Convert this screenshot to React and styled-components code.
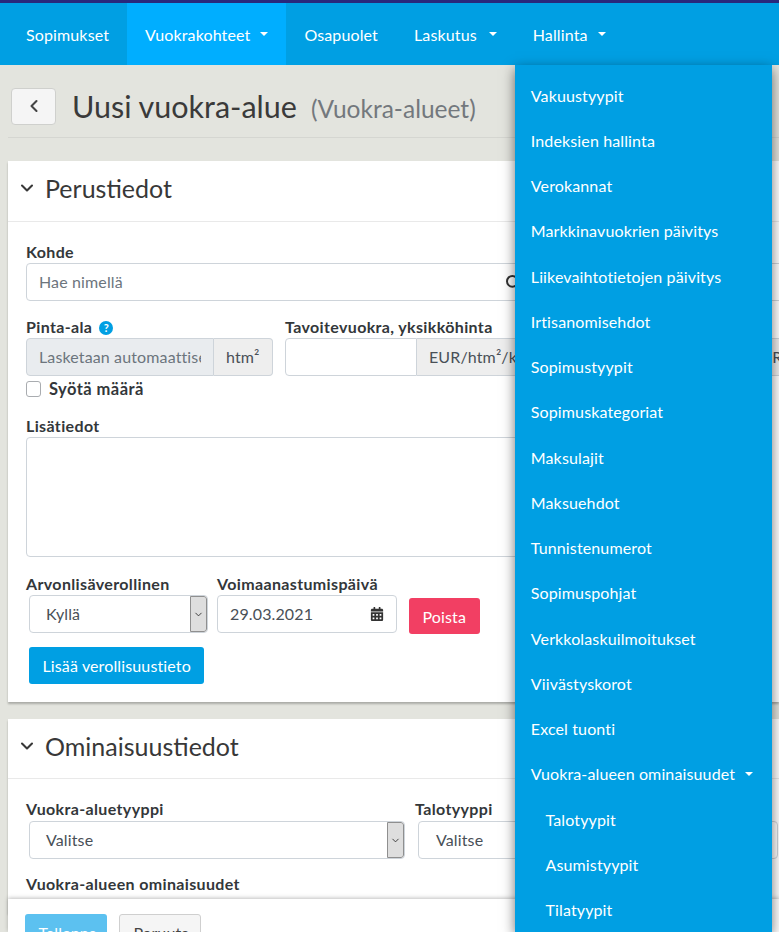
import React from "react";
import styled, { createGlobalStyle } from "styled-components";
import { ChevronDown, ChevronLeft, Search } from "lucide-react";
import { FaCalendarAlt } from "react-icons/fa";

const Global = createGlobalStyle`
  html, body { margin: 0; padding: 0; height: 932px; overflow: hidden; background: #e3e4de; }
  body { font-family: "Lato", "Noto Sans", sans-serif; color: #333; font-size: 16px; letter-spacing: .13px; }
  * { box-sizing: border-box; }
`;
const Page = styled.div`position: relative; width: 779px; height: 932px; overflow: hidden;`;
const Nav = styled.nav`display: flex; height: 65px; background: #009fe3; border-top: 3px solid #29287c;`;
const NavItem = styled.div`
  display: flex; align-items: center; gap: ${p => p.$gap || 10}px; height: 62px; padding: 0 17.5px 0 18.5px; color: #fff; font-size: 16px;
  background: ${p => p.$active ? "#00aeff" : "transparent"};
  &:first-child { padding-left: 26px; }
`;
const Caret = styled.i`display: inline-block; flex: none; width: 0; height: 0; border: 4.5px solid transparent; border-top-color: #fff; border-bottom: 0;`;
const Content = styled.main`padding: 0 0 0 8px;`;
const TitleRow = styled.header`display: flex; align-items: center; height: 73px; border-bottom: 1px solid #d5d6d1; padding-left: 3px; padding-top: 10px; margin-bottom: 23px;`;
const BackBtn = styled.button`display: flex; align-items: center; justify-content: center; width: 45px; height: 37px; padding: 0; border: 1px solid #cfd0cd; border-radius: 4px; background: #f5f5f5; color: #444;`;
const Title = styled.h1`margin: 0 0 0 16px; font-weight: 400; font-size: 30.5px; letter-spacing: 0; color: #3a3a3a;`;
const Sub = styled.small`margin-left: 14px; font-size: 24.5px; color: #73787d;`;
const Card = styled.section`background: #fff; box-shadow: 0 2px 2px rgba(0,0,0,.25); margin-bottom: 17px;`;
const CardHead = styled.div`display: flex; align-items: center; gap: 8px; height: ${p => p.$h || 61}px; padding: 0 0 6px 9px; border-bottom: 1px solid #e9e9e9; font-size: 25px; letter-spacing: 0; color: #383838;`;
const CardBody = styled.div`padding: 21px 18px 18px;`;
const Label = styled.label`display: block; margin-top: ${p => p.$top || 0}px; height: ${p => p.$h || 20}px; padding-bottom: 2px; font-weight: 700; font-size: 16px; letter-spacing: .36px; color: #33373a; line-height: 18px; white-space: nowrap;`;
const Row = styled.div`display: flex; gap: ${p => p.$gap || 12}px; margin-top: ${p => p.$top || 0}px;`;
const Input = styled.div`
  display: flex; flex: none; align-items: center; justify-content: space-between; height: 38px; padding: 0 12px 1px; width: ${p => p.$w}px;
  border: 1px solid #ced4da; border-radius: ${p => p.$radius || "4px"}; color: ${p => p.$dim ? "#6c757d" : "#495057"};
  background: ${p => p.$dim ? "#e9ecef" : "#fff"}; white-space: nowrap; overflow: hidden;
`;
const Clip = styled.span`display: block; overflow: hidden;`;
const Placeholder = styled.span`color: #6c757d;`;
const SearchWrap = styled(Input)`justify-content: flex-start; gap: 382px;`;
const Addon = styled(Input)`background: #eeeeee; color: #495057; border-left: 0; border-radius: 0 4px 4px 0;`;
const Group = styled.div`display: flex;`;
const Check = styled.div`display: flex; align-items: center; gap: 8px; margin-top: 3px; height: 20px; font-weight: 700; font-size: 16.5px; letter-spacing: .45px; color: #33373a;`;
const Box = styled.span`width: 15px; height: 16px; border: 1px solid #a9acb0; border-radius: 3px;`;
const Help = styled.span`
  display: inline-flex; align-items: center; justify-content: center; vertical-align: 1px; width: 14px; height: 14px; margin-left: 7px; border-radius: 50%;
  background: #009fe3; color: #fff; font-size: 11px; letter-spacing: 0; line-height: 14px;
`;
const TextArea = styled.div`height: 120px; width: 100%; border: 1px solid #ced4da; border-radius: 4px;`;
const SelectBox = styled.div`
  display: flex; flex: none; align-items: center; justify-content: space-between; height: 38px; width: ${p => p.$w}px; margin-left: 3px;
  padding: 0 0 1px ${p => p.$pl || 16}px; border: 1px solid #ced4da; border-radius: 4px; color: #495057; overflow: hidden;
`;
const SelectArrow = styled.span`display: flex; align-items: center; justify-content: center; align-self: stretch; width: 17px; margin-bottom: -1px; background: #dedede; border: 1px solid #8f8f8f; border-radius: 0 3px 3px 0; color: #333;`;
const Btn = styled.button`
  flex: none; height: ${p => p.$h || 37}px; width: ${p => p.$w ? `${p.$w}px` : "auto"}; padding: 0 13.5px; border: 0; border-radius: 3px; background: ${p => p.$bg}; color: #fff; font: inherit; letter-spacing: inherit; margin: ${p => p.$m || 0};
`;
const Footer = styled.footer`
  position: absolute; left: 8px; right: 0; top: 899px; height: 33px; display: flex; gap: 12px; padding: 15px 0 0 17px; background: #fff; box-shadow: 0 -1px 4px rgba(0,0,0,.25);
`;
const Cancel = styled(Btn)`background: #f5f5f5; color: #444; border: 1px solid #cfcfcf;`;
const Menu = styled.ul`
  position: absolute; left: 515px; top: 65px; width: 257px; height: 867px; margin: 0; padding: 7.4px 0 0; list-style: none; background: #009fe3; box-shadow: 0 4px 12px rgba(0,0,0,.55);
`;
const MenuItem = styled.li`display: flex; align-items: center; gap: 10px; height: 45.25px; padding-left: ${p => p.$sub ? 30.5 : 15.8}px; color: #fff;`;
const items = ["Vakuustyypit","Indeksien hallinta","Verokannat","Markkinavuokrien päivitys","Liikevaihtotietojen päivitys","Irtisanomisehdot","Sopimustyypit","Sopimuskategoriat","Maksulajit","Maksuehdot","Tunnistenumerot","Sopimuspohjat","Verkkolaskuilmoitukset","Viivästyskorot","Excel tuonti"];

export default function App() {
  return (
    <Page>
      <Global />
      <Nav>
        <NavItem>Sopimukset</NavItem>
        <NavItem $active>Vuokrakohteet <Caret /></NavItem>
        <NavItem>Osapuolet</NavItem>
        <NavItem $gap={12}>Laskutus <Caret /></NavItem>
        <NavItem>Hallinta <Caret /></NavItem>
      </Nav>
      <Content>
        <TitleRow>
          <BackBtn><ChevronLeft size={20} strokeWidth={2.5} /></BackBtn>
          <Title>Uusi vuokra-alue<Sub>(Vuokra-alueet)</Sub></Title>
        </TitleRow>
        <Card>
          <CardHead><ChevronDown size={20} strokeWidth={2.5} />Perustiedot</CardHead>
          <CardBody>
            <Label>Kohde</Label>
            <SearchWrap $w={760}><Placeholder>Hae nimellä</Placeholder><Search size={16} strokeWidth={3} color="#333" /></SearchWrap>
            <Row $top={17}>
              <div>
                <Label>Pinta-ala<Help>?</Help></Label>
                <Group><Input $w={188} $dim $radius="4px 0 0 4px"><Clip>Lasketaan automaattisesti</Clip></Input><Addon $w={59}>htm²</Addon></Group>
                <Check><Box />Syötä määrä</Check>
              </div>
              <div>
                <Label>Tavoitevuokra, yksikköhinta</Label>
                <Group><Input $w={132} $radius="4px 0 0 4px" /><Addon $w={200}>EUR/htm²/kk</Addon></Group>
              </div>
              <div>
                <Label>&nbsp;</Label>
                <Group><Input $w={110} $radius="4px 0 0 4px" /><Addon $w={200}>EUR/htm²/kk</Addon></Group>
              </div>
            </Row>
            <Label $top={18}>Lisätiedot</Label>
            <TextArea />
            <Row $top={18} $gap={9}>
              <div>
                <Label>Arvonlisäverollinen</Label>
                <SelectBox $w={179}>Kyllä<SelectArrow><ChevronDown size={11} /></SelectArrow></SelectBox>
              </div>
              <div>
                <Label>Voimaanastumispäivä</Label>
                <Input $w={180}>29.03.2021<FaCalendarAlt size={14} color="#333" /></Input>
              </div>
              <Btn $bg="#f23f63" $h={36} $m="23px 0 0 3px">Poista</Btn>
            </Row>
            <Btn $bg="#009fe3" $m="13px 0 0 3px">Lisää verollisuustieto</Btn>
          </CardBody>
        </Card>
        <Card>
          <CardHead $h={60}><ChevronDown size={20} strokeWidth={2.5} />Ominaisuustiedot</CardHead>
          <CardBody>
            <Row $gap={10}>
              <div>
                <Label $h={21}>Vuokra-aluetyyppi</Label>
                <SelectBox $w={376}>Valitse<SelectArrow><ChevronDown size={11} /></SelectArrow></SelectBox>
              </div>
              <div>
                <Label $h={21}>Talotyyppi</Label>
                <SelectBox $w={360} $pl={17}>Valitse</SelectBox>
              </div>
            </Row>
            <Label $top={16}>Vuokra-alueen ominaisuudet</Label>
          </CardBody>
        </Card>
      </Content>
      <Footer>
        <Btn $bg="#5cc1f0" $h={37} $w={82}>Tallenna</Btn>
        <Cancel $h={37} $w={82}>Peruuta</Cancel>
      </Footer>
      <Menu>
        {items.map(i => <MenuItem key={i}>{i}</MenuItem>)}
        <MenuItem>Vuokra-alueen ominaisuudet <Caret /></MenuItem>
        {["Talotyypit","Asumistyypit","Tilatyypit"].map(i => <MenuItem $sub key={i}>{i}</MenuItem>)}
      </Menu>
    </Page>
  );
}
